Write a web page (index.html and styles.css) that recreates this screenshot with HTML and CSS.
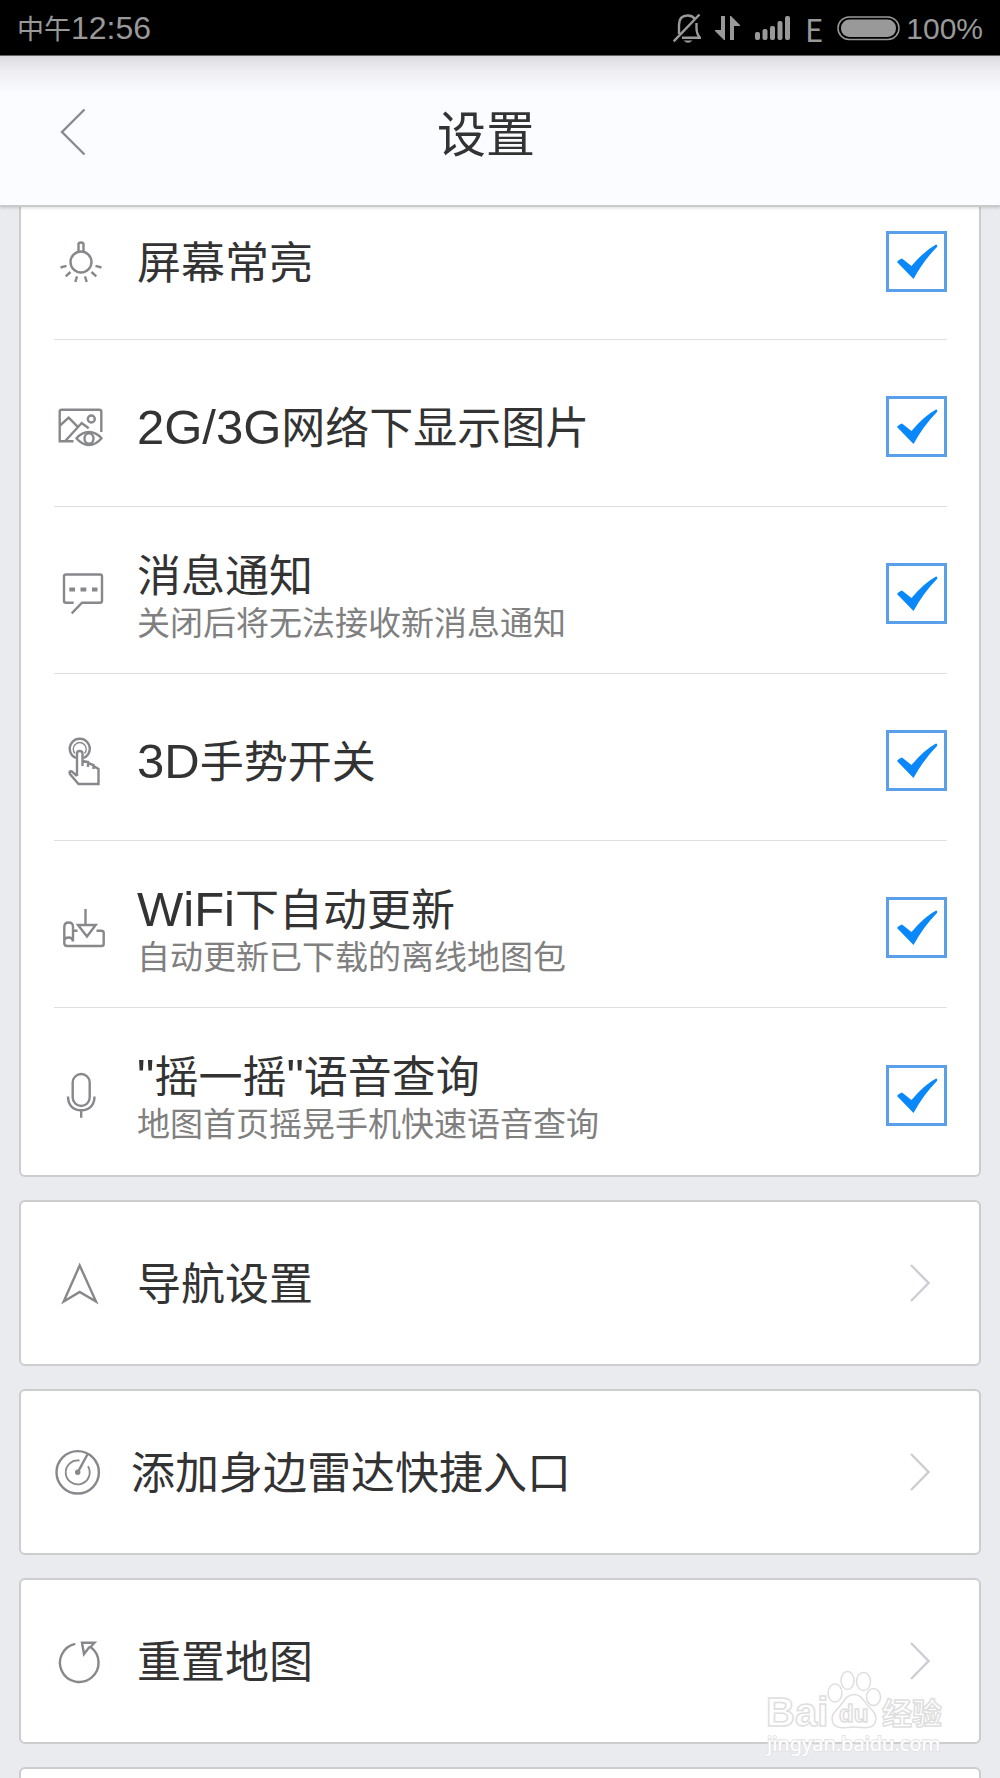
FILE: index.html
```html
<!DOCTYPE html>
<html lang="zh-CN">
<head>
<meta charset="utf-8">
<meta name="viewport" content="width=device-width, initial-scale=1">
<title>设置</title>
<link rel="stylesheet" href="styles.css">
</head>
<body>
<div class="status">
  <span class="status-time"><span class="status-cjk">中午</span>12:56</span>
  <div class="status-icons">
    <svg width="28" height="30" viewBox="0 0 28 30" fill="none" stroke="#999" stroke-width="2.400">
      <path d="M6 20V11C6 5 9 1.500 14.700 1.500C18 1.500 20 2.500 21.500 4.500M23.500 9V14C23.500 19 24.500 21 27 23.700H9M.7 27.300L26.500 .5"/>
      <path d="M10.500 26.500H19.500Q15 31 10.500 26.500Z" fill="#999" stroke="none"/>
    </svg>
    <svg width="26" height="25" viewBox="0 0 26 25" fill="#999"><path d="M6 0H10V24H9L0 15V14H6ZM15 24H19V10H25V9L16 0H15Z"/></svg>
    <svg width="36" height="25" viewBox="0 0 36 25" fill="#999">
      <rect x="0" y="16" width="5" height="8" rx="2"/><rect x="7.500" y="13" width="5" height="11" rx="2"/><rect x="15" y="10" width="5" height="14" rx="2"/><rect x="22.500" y="5" width="5" height="19" rx="2"/><rect x="30" y="0" width="5" height="24" rx="2"/>
    </svg>
    <span class="status-net">E</span>
    <svg width="63" height="25" viewBox="0 0 63 25" fill="none"><rect x="1" y="1" width="61" height="22.500" rx="11.200" stroke="#999" stroke-width="1.500"/><rect x="4" y="3.500" width="55" height="17.500" rx="8.500" fill="#999"/></svg>
    <span class="status-battery">100%</span>
  </div>
</div>

<header class="header">
  <button class="back" type="button" aria-label="返回">
    <svg width="26" height="48" viewBox="0 0 26 48" fill="none" stroke="#8a8b90" stroke-width="2.400"><path d="M24.500 1.500L2 24L24.500 46.500"/></svg>
  </button>
  <h1 class="title">设置</h1>
</header>

<main class="content">
  <section class="card card-first">
    <label class="row row-short">
      <svg class="icon" viewBox="0 0 56 56"><path d="M24.500 18.500V10.500Q24.500 8.500 27 8.500T29.500 10.500V18.500"/><circle cx="27" cy="28" r="10.500"/><path d="M6.500 33.500L12.500 31.800M16.500 38L11.700 42.300M23 42.300L21.300 48M31 42.300L32.700 48M37.500 38L42.300 42.300M41.500 31.800L47.500 33.500"/></svg>
      <span class="label">屏幕常亮</span>
      <input class="check" type="checkbox" checked>
    </label>
    <label class="row">
      <svg class="icon" viewBox="0 0 56 56"><path d="M19.500 42.300H5.700V12.700Q5.700 10.700 7.700 10.700H45.300Q47.300 10.700 47.300 12.700V33M6 26.500L14.700 18.700L23.300 27.300M11 42.300L27.700 24L34.700 29.300"/><circle cx="37.300" cy="20" r="3.500"/><path d="M22.500 39.300Q28 33 35 33T47.500 39.300Q42 46 35 46T22.500 39.300Z"/><ellipse cx="35" cy="39.500" rx="4.500" ry="5.200"/></svg>
      <span class="label"><span class="latin">2G/3G</span>网络下显示图片</span>
      <input class="check" type="checkbox" checked>
    </label>
    <label class="row">
      <svg class="icon" viewBox="0 0 56 56"><path d="M19.700 36.700H12Q10 36.700 10 34.700V10.500Q10 8.500 12 8.500H46Q48 8.500 48 10.500V34.700Q48 36.700 46 36.700H28L17.700 47.300"/><path stroke-width="4" d="M15.300 23.500H21M26.500 23.500H32.300M38 23.500H43.500"/></svg>
      <span class="label label-double">消息通知<small class="note">关闭后将无法接收新消息通知</small></span>
      <input class="check" type="checkbox" checked>
    </label>
    <label class="row">
      <svg class="icon" viewBox="0 0 56 56"><path d="M22 25A10 10 0 1 1 29.500 25"/><path stroke-width="1.400" d="M21 20.500A6.500 6.500 0 1 1 30.500 20.500"/><path d="M23 43V20.500Q23 18 25.700 18T28.500 20.500V33M28.500 28L34 29V34M34 30L39.500 32V36M39.500 33L44.500 36V51H24.500L16 41Q14.500 37.500 18 38.500L23 43"/></svg>
      <span class="label"><span class="latin">3D</span>手势开关</span>
      <input class="check" type="checkbox" checked>
    </label>
    <label class="row">
      <svg class="icon" viewBox="0 0 56 56"><path d="M10.300 40V27Q10.300 22.500 14.700 22.500T19 27V41.500M10.300 40Q11 37.500 14.700 37.500T19 41.500M10.300 40V43Q10.300 46 13.300 46H47.500Q49.700 46 49.700 44V33Q49.700 30.700 47.500 30.700H42.500M19 30.700H23.500M31.500 9V25M24 25H41.700L33 36.500Z"/></svg>
      <span class="label label-double"><span class="latin">WiFi</span>下自动更新<small class="note">自动更新已下载的离线地图包</small></span>
      <input class="check" type="checkbox" checked>
    </label>
    <label class="row">
      <svg class="icon" viewBox="0 0 56 56"><rect x="18.700" y="7" width="17" height="32" rx="8.500"/><path d="M14 29.500C14 38 19 43.300 27.200 43.300S40.500 38 40.500 29.500M27.200 43.300V50.700"/></svg>
      <span class="label label-double"><span class="latin">"</span>摇一摇<span class="latin">"</span>语音查询<small class="note">地图首页摇晃手机快速语音查询</small></span>
      <input class="check" type="checkbox" checked>
    </label>
  </section>

  <a class="card link" href="#navigation">
    <svg class="icon" viewBox="0 0 56 56"><path d="M25.700 10.500L42 46.500L25.700 37L9.700 46.500Z"/></svg>
    <span class="label">导航设置</span>
    <svg class="chevron" viewBox="0 0 20 38"><path d="M1 1L18.500 19L1 37"/></svg>
  </a>
  <a class="card link link-tight" href="#radar">
    <svg class="icon" viewBox="0 0 56 56"><circle cx="23.700" cy="28.300" r="21.200"/><path stroke-width="1.800" d="M25.500 16.500A12 12 0 1 0 34 22.200"/><circle cx="23.700" cy="28.300" r="2" fill="#87888c" stroke-width="1.500"/><path d="M23.700 28.300L33.700 10"/></svg>
    <span class="label">添加身边雷达快捷入口</span>
    <svg class="chevron" viewBox="0 0 20 38"><path d="M1 1L18.500 19L1 37"/></svg>
  </a>
  <a class="card link" href="#reset">
    <svg class="icon" viewBox="0 0 56 56"><path d="M21.300 10.800A19.300 19.300 0 1 0 36.500 14L40.500 9.700H28L30 21L35 14.500L36.500 14"/></svg>
    <span class="label">重置地图</span>
    <svg class="chevron" viewBox="0 0 20 38"><path d="M1 1L18.500 19L1 37"/></svg>
  </a>
  <section class="card link"></section>
</main>

<svg class="watermark" width="182" height="92" viewBox="0 0 182 92" role="img" aria-label="Baidu 经验">
  <g class="mark">
    <text x="1" y="58" class="mark-name">Bai</text>
    <ellipse cx="70" cy="25" rx="7" ry="9"/><ellipse cx="82.500" cy="12.500" rx="6.500" ry="9"/><ellipse cx="98.500" cy="13.500" rx="7" ry="9"/><ellipse cx="108.500" cy="29" rx="7" ry="8.500"/>
    <path d="M89 26.500C97 26.500 99 34 104 39C110 44 113 49 110 55C107 61 99 60 89 59C79 60 70 61 67.500 54C65 47 71 43 75 38C79 33 82 26.500 89 26.500Z"/>
    <text x="74" y="54" class="mark-du">du</text>
    <text x="117" y="56" class="mark-cjk">经验</text>
    <text x="2" y="83" class="mark-url">jingyan.baidu.com</text>
  </g>
</svg>
</body>
</html>
```
FILE: styles.css
```css
* {
  box-sizing: border-box;
}

body {
  position: relative;
  display: flex;
  flex-direction: column;
  height: 100vh;
  margin: 0;
  overflow: hidden;
  background: #eaebef;
  color: #333;
  font-family: "Liberation Sans", "Noto Sans CJK SC", sans-serif;
}

.status {
  display: flex;
  flex: none;
  align-items: center;
  justify-content: space-between;
  height: 56px;
  padding: 2px 17px 0;
  border-bottom: 1px solid #666;
  background: #000;
  color: #999;
  font-size: 32px;
  line-height: 54px;
}

.status-cjk {
  font-size: 27px;
}

.status-icons {
  display: flex;
  align-items: center;
  gap: 14px;
}

.status-net {
  font-family: "Noto Sans CJK SC", sans-serif;
  font-size: 31px;
  line-height: 50px;
}

.status-battery {
  margin-left: -8px;
  font-size: 30px;
}

.header {
  z-index: 1;
  display: grid;
  flex: none;
  grid-template-columns: 1fr auto 1fr;
  align-items: center;
  height: 151px;
  padding: 2px 74px 0 46px;
  border-bottom: 2px solid #c9cbca;
  background: linear-gradient(#dcdce1, #efeff3 16px, #fbfcff 38px);
  box-shadow: 0 1px 3px rgba(0, 0, 0, 0.15);
}

.back {
  display: flex;
  justify-self: start;
  padding: 14px;
  border: 0;
  background: none;
}

.title {
  margin: 0;
  padding-top: 6px;
  font-size: 49px;
  font-weight: 400;
  line-height: 60px;
}

.content {
  display: flex;
  flex: 1;
  flex-direction: column;
  gap: 23px;
  min-height: 0;
  padding: 0 19px;
  overflow: hidden;
}

.card {
  flex: none;
  padding: 0 32px 0 33px;
  border: 2px solid #cccdcd;
  border-radius: 6px;
  background: #fff;
}

.card-first {
  border-top: 0;
  border-radius: 0 0 6px 6px;
}

.row,
.link {
  display: grid;
  grid-template-columns: 83px 1fr auto;
  align-items: center;
}

.row {
  height: 167px;
  padding-top: 7px;
  border-bottom: 1px solid #dedfe0;
}

.row-short {
  height: 133px;
  padding: 0 0 23px;
}

.row:last-child {
  border-bottom: 0;
}

.link {
  height: 166px;
  color: inherit;
  text-decoration: none;
}

.link-tight {
  grid-template-columns: 77px 1fr auto;
}

.icon {
  width: 56px;
  height: 56px;
  fill: none;
  stroke: #87888c;
  stroke-width: 2.4;
}

.label {
  padding-top: 4px;
  font-size: 44px;
  line-height: 52px;
}

.label-double {
  padding-top: 8px;
}

.latin {
  font-size: 49px;
  line-height: 48px;
}

.note {
  display: block;
  color: #808080;
  font-size: 33px;
  line-height: 42px;
}

.check {
  width: 61px;
  height: 61px;
  margin: 0;
  border: 3px solid #5a9fe9;
  background: #fff url("data:image/svg+xml,%3Csvg xmlns='http://www.w3.org/2000/svg' viewBox='0 0 61 61'%3E%3Cpath fill='%230a88fa' d='M11 31Q13 28 16 27.500L25.500 35Q38 20 50 13.500Q52 14 51 16Q38 29 27.500 48Z'/%3E%3C/svg%3E") center / 61px 61px no-repeat;
  appearance: none;
}

.chevron {
  width: 20px;
  height: 38px;
  margin-right: 17px;
  fill: none;
  stroke: #cdced3;
  stroke-width: 2.4;
}

/* Site mark laid over the lower right corner of the list */
.watermark {
  position: absolute;
  right: 53px;
  bottom: 18px;
  pointer-events: none;
}

.mark {
  fill: #fff;
  stroke: #dedede;
  stroke-width: 1.5;
  font-weight: 700;
}

.mark-name {
  font-size: 40px;
}

.mark-du {
  font-size: 24px;
}

.mark-cjk {
  font-size: 30px;
}

.mark-url {
  stroke-width: 2;
  paint-order: stroke;
  stroke: #e4e4e6;
  font-family: "Noto Sans", sans-serif;
  font-size: 20px;
  font-weight: 400;
}
```
